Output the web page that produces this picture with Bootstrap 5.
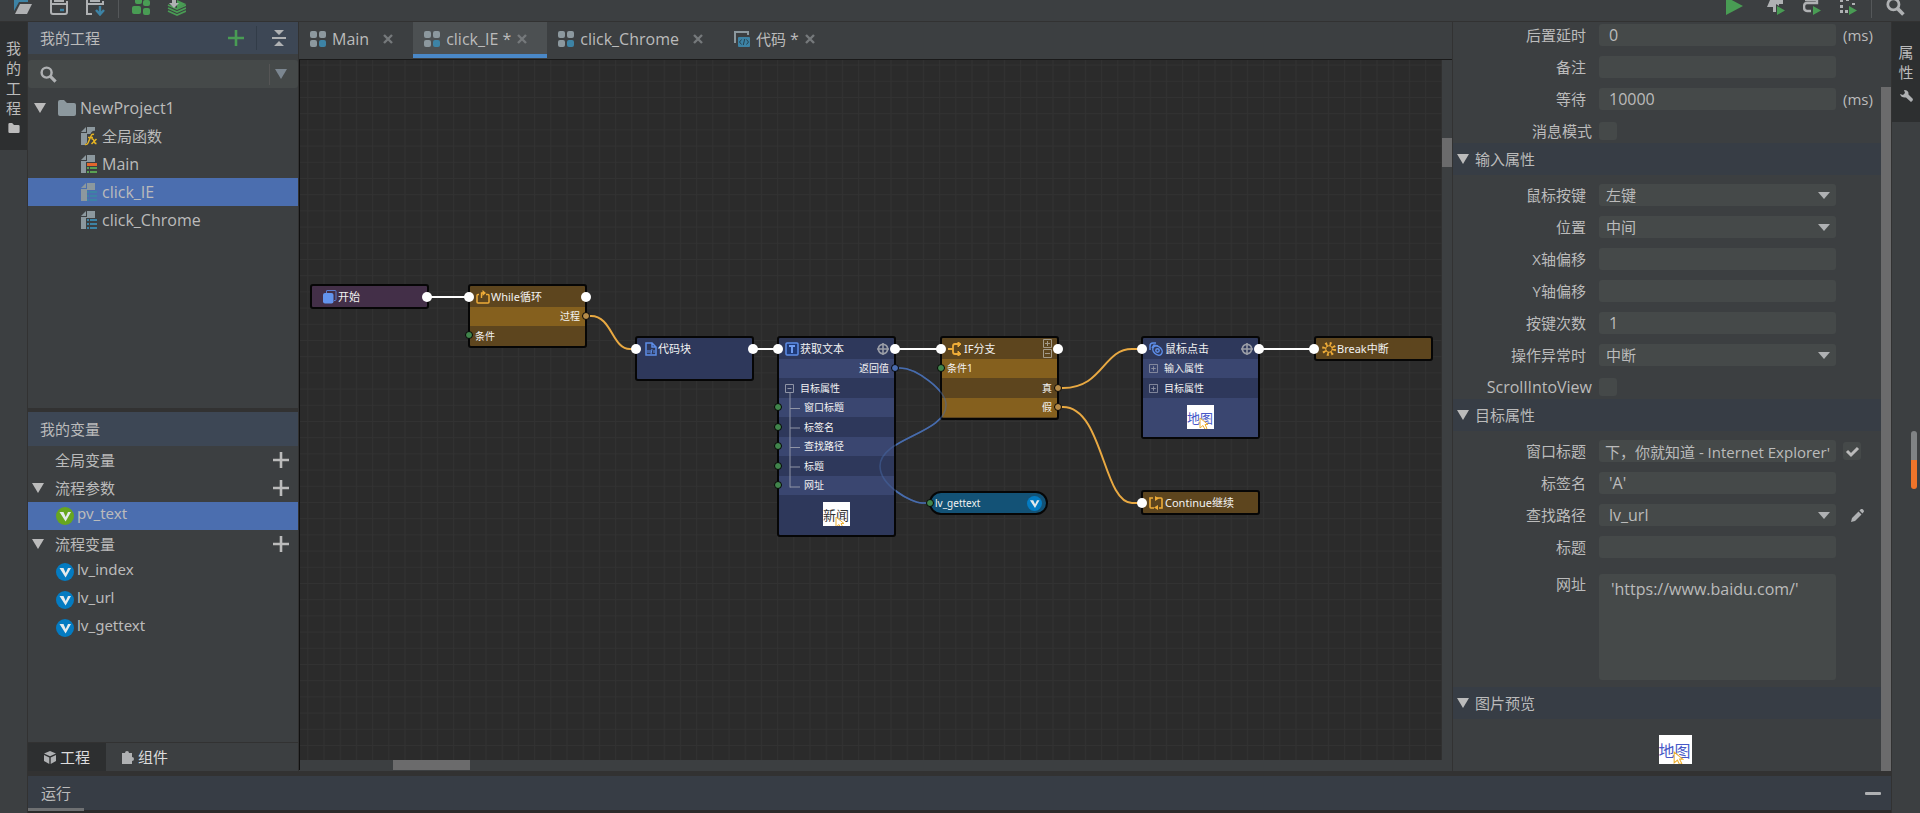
<!DOCTYPE html>
<html lang="zh-CN">
<head>
<meta charset="utf-8">
<meta name="viewport" content="width=device-width, initial-scale=1">
<title>NewProject1</title>
<link href="https://cdn.jsdelivr.net/npm/bootstrap@5.3.0/dist/css/bootstrap.min.css" rel="stylesheet">
<style>
:root{--ui:#3c3f41;--line:#323232;--head:#3d4755;--sub:#373d45;--field:#454949;--ink:#bbbbbb;--sel:#4b6eaf;--icon:#afb1b3}
body{background:var(--ui);color:var(--ink);font:15px/20px "Open Sans","Noto Sans CJK SC",sans-serif}
svg{display:block;flex:none}
button{color:inherit}
.plain{background:none;border:0;padding:0;color:inherit;display:flex;align-items:center}
.latin{font-size:16px}
.toolbar{height:22px;border-bottom:1px solid var(--line);align-items:flex-start}
.toolbar .plain{align-items:flex-start}
.toolbar .rule{width:1px;height:18px;background:#55585a}
.rail{width:27px}
.rail-end{width:29px;border-left:1px solid var(--line)}
.railtab{background:#2d2f30;width:100%;flex-direction:column;align-items:center}
.railtab span{width:15px;word-break:break-all}
.side{width:270px}
.panehead{background:var(--head);padding-left:12px}
.treerow{height:28px;cursor:default;color:inherit;text-decoration:none}
.treerow.on,.treerow:hover{background:var(--sel)}
.varname{font-family:"Noto Sans",sans-serif;padding-top:1px}
.search{height:28px;background:var(--field);margin:6px 0;border-radius:3px}
.search input{background:none;border:0;outline:0;color:inherit;min-width:0}
.sidetab{height:28px;color:#ddd}
.sidetab.on{background:#2d2f30}
.tabs{height:38px;border-bottom:1px solid #1a1a1a;padding-bottom:1px}
.filetab{height:36px;border-bottom:4px solid transparent;padding:2px 20px 0 11px;gap:6px}
.filetab.on{background:#4c5052;border-color:#4a88c7}
.board{background:#2b2b2b;border-left:1px solid #111;overflow:hidden}
.vbar{width:10px}.hbar{height:10px}
.thumb{background:#6b6b6c}
.node{position:absolute;width:119px;border:2px solid #060606;border-radius:3px;font-family:"Noto Sans","Noto Sans CJK SC",sans-serif;font-size:10px;line-height:19px;color:#f2f2f2}
.node .cap{height:21px;line-height:21px;font-size:11px;padding:0 5px 0 6px;gap:1px}
.node .cell{height:19px;padding:0 5px;display:flex;align-items:center}
.node .cell:nth-child(odd){height:20px}
.blue{background:#2e385b}
.blue .cell:nth-child(even),.blue .lit{background:#3a4670}
.gold{background:#5d451e}
.gold .cell:nth-child(even){background:#85601e}
.gold.branch .cell:nth-child(even){background:#85601e}
.plum{background:#432f48}
.pill{border-radius:12px;background:#135276}
.leaf{padding-left:25px!important}
.shot{background:#fff;color:#333;width:27px;height:24px;font-size:13px;line-height:26px;position:relative;overflow:hidden;white-space:nowrap}
.shot svg{position:absolute;left:12px;bottom:0}
.shot.link{color:#4759c8}
.shot.large{width:33px;height:29px;font-size:16px;line-height:32px}
.shot.large svg{left:14px}
.props{width:439px;border-left:1px solid var(--line)}
.section{height:32px;background:var(--sub);padding-left:4px;gap:6px}
.group{display:grid;gap:10px;padding:9px 0 1px}
.group.first{padding-top:2px}
.group.last{padding-bottom:7px}
.prop{display:grid;grid-template-columns:133px 1fr 32px;column-gap:13px;align-items:center;min-height:22px}
.prop>label{text-align:right;white-space:nowrap}
.prop>:nth-child(3){margin-left:-6px}
.prop.tick{grid-template-columns:139px 1fr;column-gap:7px}
.box{height:22px;width:100%;min-width:0;background-color:var(--field);border:0;border-radius:3px;color:var(--ink);padding:0 10px;outline:0;font-size:16px;line-height:20px}
.box.tight{padding:0 3px 0 6px;font-size:15px}
textarea.box{height:106px;padding:5px 12px;resize:none;display:block}
select.box{appearance:none;padding:0 7px;font-size:15px;background-image:url("data:image/svg+xml,%3Csvg xmlns='http://www.w3.org/2000/svg' width='12' height='7'%3E%3Cpath d='M0 0h12L6 7z' fill='%23afb1b3'/%3E%3C/svg%3E");background-repeat:no-repeat;background-position:right 6px center}
select.box.path{padding-left:10px;font-size:16px}
.tickbox{appearance:none;width:18px;height:18px;background:var(--field);border-radius:3px;margin:0;display:block}
.tickbox:checked{background:var(--field) url("data:image/svg+xml,%3Csvg xmlns='http://www.w3.org/2000/svg' width='18' height='18'%3E%3Cpath d='M4 9l4 4 7-7' fill='none' stroke='%23bbb' stroke-width='3'/%3E%3C/svg%3E")}
.runhead{height:34px;background:var(--sub);padding:0 10px 0 13px}
.gutter{height:5px;background:#323232}
.runfoot{height:3px;background:#2b2b2b}
.mark-run{width:56px;height:3px;background:#6e7072;position:absolute;left:0;bottom:-1px}
.meter{position:absolute;right:3px;top:431px;width:6px;height:58px;border-radius:3px;background:linear-gradient(#808385 50%,#f0742a 50%)}
</style>
</head>
<body>
<svg width="0" height="0" class="position-absolute" aria-hidden="true">
 <symbol id="page" viewBox="0 0 16 19"><path d="M6 0h8v7H6v11H0V6h6z" fill="#8c989e"/><path d="M0 5L5 0v5z" fill="#8c989e"/></symbol>
 <symbol id="tri" viewBox="0 0 12 10"><path d="M0 0h12L6 10z" fill="currentColor"/></symbol>
 <symbol id="plus" viewBox="0 0 16 16"><path d="M8 0v16M0 8h16" stroke="currentColor" stroke-width="2.600"/></symbol>
 <symbol id="grid4" viewBox="0 0 16 16"><g fill="#8c989e"><rect width="7" height="7" rx="2"/><rect x="9" width="7" height="7" rx="2"/><rect y="9" width="7" height="7" rx="2"/></g><rect x="9" y="9" width="7" height="7" rx="2" fill="#3d83a5"/></symbol>
 <symbol id="close" viewBox="0 0 10 10"><path d="M1 1l8 8M9 1L1 9" stroke="#75797b" stroke-width="2.4"/></symbol>
 <symbol id="vee" viewBox="0 0 18 18"><circle cx="9" cy="9" r="9" fill="currentColor"/><path d="M3.5 5h4l2.2 5L12 5h3L9.6 14.5z" fill="#e4eaec"/></symbol>
 <symbol id="folder" viewBox="0 0 18 16"><path d="M0 2q0-2 2-2h4l3 3h7q2 0 2 2v9q0 2-2 2H2q-2 0-2-2z" fill="currentColor"/></symbol>
 <symbol id="lens" viewBox="0 0 18 18"><circle cx="7" cy="7" r="5.3" fill="none" stroke="#afb1b3" stroke-width="2.6"/><path d="M11 11l5.5 5.5" stroke="#afb1b3" stroke-width="3.4"/></symbol>
 <symbol id="aim" viewBox="0 0 12 12"><circle cx="6" cy="6" r="4.6" fill="none" stroke="#9a9da6" stroke-width="1.800"/><path d="M6 0v12M0 6h12" stroke="#9a9da6" stroke-width="1.600"/></symbol>
 <symbol id="arrow" viewBox="0 0 10 12"><path d="M1 1v10l3-2.500 2 4 2-1-2-4h3z" fill="#fff" stroke="#efb030"/></symbol>
 <symbol id="open4" viewBox="0 0 10 10"><path d="M.5.5h9v9h-9zM2.500 5h5M5 2.500v5" fill="none" stroke="#8e93a5"/></symbol>
 <symbol id="go" viewBox="0 0 8 9"><path d="M0 0l8 4.500L0 9z" fill="#499c54"/></symbol>
</svg>

<div class="d-flex flex-column vh-100 overflow-hidden position-relative">
 <header class="toolbar d-flex flex-shrink-0 justify-content-between overflow-hidden">
  <div class="d-flex" style="padding-left:14px;gap:13px">
   <div class="d-flex" style="gap:18px">
    <button class="plain" aria-label="打开"><svg width="18" height="15"><path d="M0 0h14v2H5L0 11z" fill="#3d83a5"/><path d="M6 4h12l-5 10H1z" fill="#afb1b3"/></svg></button>
    <button class="plain" aria-label="保存"><svg width="18" height="15"><path d="M1 0v12q0 2 2 2h12q2 0 2-2V1" fill="none" stroke="#afb1b3" stroke-width="2"/><path d="M1 4h16M4 1h10" stroke="#afb1b3" stroke-width="2"/><path d="M10 10h4" stroke="#3d83a5" stroke-width="2.400"/></svg></button>
    <button class="plain" aria-label="另存"><svg width="19" height="16"><path d="M1 0v14h5M1 4h16V1M4 1h10" fill="none" stroke="#afb1b3" stroke-width="2"/><path d="M14 6v8M10 10l4 4.500 4-4.500" fill="none" stroke="#3d83a5" stroke-width="2.400"/></svg></button>
   </div>
   <div class="rule"></div>
   <div class="d-flex" style="gap:17px">
    <button class="plain" aria-label="流程"><svg width="18" height="15"><g fill="#499c54"><rect x="3" y="-4" width="7" height="8" rx="2"/><rect x="11" y="0" width="7" height="6" rx="2"/><rect x="0" y="6" width="9" height="8" rx="2"/><rect x="11" y="8" width="7" height="7" rx="2"/></g></svg></button>
    <button class="plain" aria-label="发布"><svg width="19" height="16"><path d="M10 0l9 4-9 5z" fill="#499c54"/><path d="M1 5l9 4 9-4M1 8l9 4 9-4M1 11l9 4 9-4" fill="none" stroke="#499c54" stroke-width="1.700"/><path d="M5 0h4v3h3L7 8 2 3h3z" fill="#afb1b3"/></svg></button>
   </div>
  </div>
  <div class="d-flex" style="gap:14px;padding-right:15px">
   <div class="d-flex" style="gap:18px">
    <button class="plain" aria-label="运行"><svg width="23" height="16"><path d="M0-3l17 9-17 9z" fill="#499c54"/></svg></button>
    <button class="plain" aria-label="单步"><svg width="18" height="16"><path d="M3 0h13v4h-4v8H6V7H0z" fill="#afb1b3"/><path d="M9 4l10 6-10 6z" fill="#3c3f41"/><use href="#go" x="10" y="6" width="8" height="9"/></svg></button>
    <button class="plain" aria-label="跳过"><svg width="18" height="16"><path d="M2 0h12v3H4q-3 0-3 4t3 4h4" fill="none" stroke="#afb1b3" stroke-width="2.400"/><use href="#go" x="10" y="6" width="8" height="9"/></svg></button>
    <button class="plain" aria-label="断点"><svg width="18" height="16"><path d="M1 0h3v2H1zM7 0h3v1H7zM13 3h3v2h-3zM1 5h3v3H1zM1 10h3v3H1zM6 10h3v3H6z" fill="#afb1b3"/><use href="#go" x="10" y="6" width="8" height="9"/></svg></button>
   </div>
   <div class="rule"></div>
   <button class="plain" aria-label="搜索"><svg width="19" height="16" viewBox="0 3 19 16"><use href="#lens" width="19" height="19"/></svg></button>
  </div>
 </header>

 <div class="d-flex flex-fill overflow-hidden">
  <nav class="rail flex-shrink-0"><button class="plain railtab" style="padding:16px 0 17px"><span>我的工程</span><svg style="margin-top:5px" width="12" height="10"><use href="#folder" width="12" height="10"/></svg></button></nav>

  <div class="d-flex flex-column flex-fill overflow-hidden border-start" style="--bs-border-color:#323232">
   <div class="d-flex flex-fill overflow-hidden">
    <aside class="side d-flex flex-column flex-shrink-0">
     <div class="panehead d-flex align-items-center" style="height:32px">
      <span class="me-auto">我的工程</span>
      <button class="plain" aria-label="新建" style="color:#499c54"><svg width="16" height="16"><use href="#plus"/></svg></button>
      <span class="align-self-stretch my-1" style="width:1px;background:#323c48;margin-left:12px"></span>
      <button class="plain" aria-label="折叠" style="padding:0 12px 0 15px"><svg width="14" height="16"><path d="M2 0h10L7 5zM2 16h10l-5-5z" fill="#afb1b3"/><path d="M0 8h14" stroke="#afb1b3" stroke-width="2"/></svg></button>
     </div>
     <div class="search d-flex align-items-center ps-2 flex-shrink-0">
      <svg class="ms-1" width="17" height="17"><use href="#lens"/></svg>
      <input type="search" class="flex-fill ms-2" aria-label="搜索工程">
      <button class="plain h-75" aria-label="筛选" style="border-left:1px solid #555;color:#7b8690;padding:0 11px 0 5px"><svg width="12" height="10"><use href="#tri"/></svg></button>
     </div>
     <div class="treerow latin d-flex align-items-center" style="padding-left:6px"><svg width="12" height="10"><use href="#tri"/></svg><svg style="margin:0 4px 0 12px;color:#8c989e" width="18" height="16"><use href="#folder"/></svg>NewProject1</div>
     <a href="#" class="treerow d-flex align-items-center" style="padding-left:53px;gap:5px"><svg width="16" height="19"><use href="#page"/><path d="M14.500 6.500q-2-2-3.500 1.500L7.500 17q-1 2-3 1M7 10h5M10 12q2-1 3 2t2 3M15.500 12l-5 5" stroke="#3c3f41" stroke-width="4" fill="none"/><path d="M13 7.500q-2-1-3 1.500L7 16q-1 2-3 1.500M7 10.500h5M10.500 12q2-.5 2.500 2t2.500 2.500M15.500 12l-5 5" stroke="#e6b422" stroke-width="1.500" fill="none"/></svg>全局函数</a>
     <a href="#" class="treerow latin d-flex align-items-center" style="padding-left:53px;gap:5px"><svg width="16" height="19"><use href="#page"/><path d="M5 7h11v12H5z" fill="#3c3f41"/><path d="M6 8h10v3H6z" fill="#e2662c"/><path d="M6 12h2v2H6zm3 0h7v2H9zM6 16h2v2H6zm3 0h7v2H9z" fill="#5aa053"/></svg>Main</a>
     <a href="#" class="treerow latin on d-flex align-items-center" style="padding-left:53px;gap:5px"><svg width="16" height="19"><use href="#page"/><path d="M6 8h2v2H6zm3 0h7v2H9zM6 12h2v2H6zm3 0h7v2H9zM6 16h2v2H6zm3 0h7v2H9z" fill="#3d83a5"/></svg>click_IE</a>
     <a href="#" class="treerow latin d-flex align-items-center" style="padding-left:53px;gap:5px"><svg width="16" height="19"><use href="#page"/><path d="M5 7h11v12H5z" fill="#3c3f41"/><path d="M6 8h2v2H6zm3 0h7v2H9zM6 12h2v2H6zm3 0h7v2H9zM6 16h2v2H6zm3 0h7v2H9z" fill="#3d83a5"/></svg>click_Chrome</a>
     <div class="flex-fill"></div>
     <div style="height:4px;background:#323232"></div>
     <section style="height:330px">
      <div class="panehead d-flex align-items-center" style="height:34px">我的变量</div>
      <div class="treerow d-flex align-items-center" style="padding:0 9px 0 27px"><span class="me-auto">全局变量</span><button class="plain" aria-label="添加全局变量"><svg width="16" height="16"><use href="#plus"/></svg></button></div>
      <div class="treerow d-flex align-items-center" style="padding:0 9px 0 4px"><svg width="12" height="10"><use href="#tri"/></svg><span class="me-auto" style="padding-left:11px">流程参数</span><button class="plain" aria-label="添加流程参数"><svg width="16" height="16"><use href="#plus"/></svg></button></div>
      <a href="#" class="treerow on d-flex" style="padding-left:28px;gap:3px"><svg style="color:#67a61f;margin-top:5px" width="18" height="18"><use href="#vee"/></svg><span class="varname">pv_text</span></a>
      <div class="treerow d-flex align-items-center" style="padding:0 9px 0 4px"><svg width="12" height="10"><use href="#tri"/></svg><span class="me-auto" style="padding-left:11px">流程变量</span><button class="plain" aria-label="添加流程变量"><svg width="16" height="16"><use href="#plus"/></svg></button></div>
      <a href="#" class="treerow d-flex" style="padding-left:28px;gap:3px"><svg style="color:#047bc1;margin-top:5px" width="18" height="18"><use href="#vee"/></svg><span class="varname">lv_index</span></a>
      <a href="#" class="treerow d-flex" style="padding-left:28px;gap:3px"><svg style="color:#047bc1;margin-top:5px" width="18" height="18"><use href="#vee"/></svg><span class="varname">lv_url</span></a>
      <a href="#" class="treerow d-flex" style="padding-left:28px;gap:3px"><svg style="color:#047bc1;margin-top:5px" width="18" height="18"><use href="#vee"/></svg><span class="varname">lv_gettext</span></a>
     </section>
     <div class="d-flex border-top" style="--bs-border-color:#323232">
      <button class="plain sidetab on" style="padding:0 16px;gap:4px"><svg width="12" height="13"><path d="M6 0l6 2.500L6 5.300 0 2.500zM0 4l5.300 2.500V13L0 10zM12 4L6.700 6.500V13L12 10z" fill="#afb1b3"/></svg>工程</button>
      <button class="plain sidetab" style="padding:0 16px;gap:4px"><svg width="12" height="13"><path d="M0 2h3q0-2 2-2t2 2h3v4q2 0 2 2t-2 2v3H0z" fill="#afb1b3"/></svg>组件</button>
     </div>
    </aside>

    <main class="d-flex flex-column flex-fill overflow-hidden border-start" style="--bs-border-color:#323232">
     <div class="tabs d-flex flex-shrink-0">
      <div class="filetab latin d-flex align-items-center"><svg width="16" height="16"><use href="#grid4"/></svg>Main<button class="plain ms-2" aria-label="关闭"><svg width="10" height="10"><use href="#close"/></svg></button></div>
      <div class="filetab latin on d-flex align-items-center"><svg width="16" height="16"><use href="#grid4"/></svg>click_IE *<button class="plain" aria-label="关闭"><svg width="10" height="10"><use href="#close"/></svg></button></div>
      <div class="filetab latin d-flex align-items-center"><svg width="16" height="16"><use href="#grid4"/></svg>click_Chrome<button class="plain ms-2" aria-label="关闭"><svg width="10" height="10"><use href="#close"/></svg></button></div>
      <div class="filetab d-flex align-items-center"><svg width="16" height="16"><path d="M1 12V1h13v3" fill="none" stroke="#8c989e" stroke-width="2"/><rect x="3" y="4" width="13" height="12" fill="#3c3f41"/><rect x="4" y="6" width="12" height="10" rx="1" fill="#3d83a5"/><path d="M7.500 8.500L5.500 11l2 2.500M12.500 8.500l2 2.500-2 2.500M10.700 8l-1.400 6" fill="none" stroke="#26424f"/></svg><span>代码 <span class="latin">*</span></span><button class="plain" aria-label="关闭"><svg width="10" height="10"><use href="#close"/></svg></button></div>
     </div>
     <div class="d-flex flex-fill overflow-hidden">
      <div class="board position-relative flex-fill">
       <svg class="position-absolute top-0 start-0" width="100%" height="100%">
        <defs><pattern id="mesh" x="7.3" y="4.600" width="16.200" height="16.200" patternUnits="userSpaceOnUse"><path d="M.5 0v16.200M0 .5h16.200" stroke="#323232"/></pattern></defs>
        <rect width="100%" height="100%" fill="url(#mesh)"/>
        <g fill="none" stroke-width="2">
         <path d="M127 237h42M453 289h25M595 289h46M959 289h55" stroke="#fff"/>
         <path d="M286 256h5C312 256 312 289 330 289h6M758 328h5C803 328 803 289 832 289h10M758 347h5C803 347 803 443 832 443h10" stroke="#e9a942"/>
         <path id="link" d="M595 308h5C616 308 646 330 646 345C646 374 580 378 580 406C580 426 612 443 622 443h8" stroke="#486cae" stroke-width="1.600"/>
        </g>
       </svg>
       <article class="node plum" style="left:10px;top:224px"><div class="cap d-flex align-items-center" style="padding-left:11px"><svg width="14" height="14"><path d="M3.500 3V1q0-.5.5-.5h8q1 0 1 1v8q0 1-1 1h-1" fill="none" stroke="#5b7ed0"/><rect x="0" y="3" width="10.500" height="10.500" rx="2" fill="#6394ee"/></svg>开始</div></article>
       <article class="node gold" style="left:168px;top:224px"><div class="cap d-flex align-items-center"><svg width="14" height="14"><path d="M3 4.500H2q-1 0-1 1V12q0 1 1 1h10q1 0 1-1V5.500q0-1-1-1h-2" fill="none" stroke="#eeac38" stroke-width="1.500"/><path d="M5.500 8V3H8" fill="none" stroke="#eeac38" stroke-width="1.400"/><path d="M6.500 0L10 3 6.500 6z" fill="#eeac38"/></svg>While循环</div><div class="cell justify-content-end">过程</div><div class="cell">条件</div></article>
       <article class="node blue" style="left:335px;top:276px;height:45px"><div class="cap d-flex align-items-center" style="padding-left:8px"><svg width="12" height="14"><path d="M1 1h6l4 4v8H1zM7 1v4h4" fill="none" stroke="#5d8de8" stroke-width="1.500"/><path d="M3 8v3M5 8v3M7 7L6 12M9 8v3" stroke="#5d8de8"/></svg>代码块</div></article>
       <article class="node blue" style="left:477px;top:276px"><div class="cap d-flex align-items-center"><svg width="14" height="14"><rect x="1" y="1" width="12" height="12" rx="1" fill="#1f3a78" stroke="#5d8de8" stroke-width="1.500"/><path d="M4 4h6M7 4v7" stroke="#6e9bf0" stroke-width="2"/></svg>获取文本<svg class="ms-auto" width="12" height="12"><use href="#aim"/></svg></div>
        <div class="cell justify-content-end">返回值</div>
        <div class="cell" style="padding-left:21px">目标属性</div>
        <div class="cell leaf">窗口标题</div><div class="cell leaf">标签名</div><div class="cell leaf">查找路径</div><div class="cell leaf">标题</div><div class="cell leaf">网址</div>
        <div class="d-flex justify-content-center" style="height:40px;padding-top:7px"><div class="shot">新闻<svg width="10" height="10" viewBox="0 0 10 10"><use href="#arrow" width="10" height="12"/></svg></div></div>
        <svg class="position-absolute" style="left:6px;top:45px" width="16" height="106"><path d="M.5 1.500h8v8h-8zM2.500 5.500h4M5 10v94.500M5 25.500h10M5 45h10M5 64.500h10M5 84h10M5 104h10" fill="none" stroke="#8f94a6"/></svg>
       </article>
       <article class="node gold branch" style="left:640px;top:276px;padding-bottom:1px"><div class="cap d-flex align-items-center"><svg width="15" height="14"><path d="M0 7h5M12 2H7Q5 2 5 4v6q0 2 2 2h5" fill="none" stroke="#eeac38" stroke-width="1.800"/><path d="M10 0l3 2-3 3zM10 9l3 3-3 2z" fill="#eeac38" stroke="#eeac38"/></svg>IF分支<svg class="ms-auto" width="9" height="19"><path d="M.5.500h8v8h-8zM2 4.500h5M4.500 2v5M.5 10.500h8v8h-8zM2 14.500h5" fill="none" stroke="#a39a89"/></svg></div><div class="cell">条件1</div><div class="cell justify-content-end">真</div><div class="cell justify-content-end">假</div></article>
       <article class="node blue" style="left:841px;top:276px"><div class="cap d-flex align-items-center" style="gap:2px"><svg width="14" height="14"><g fill="none" stroke="#5d8de8" stroke-width="1.500"><path d="M1 8V4q0-3 3-3h3"/><ellipse cx="8.500" cy="8.500" rx="5.200" ry="4" transform="rotate(45 8.500 8.500)"/><circle cx="8.500" cy="8.500" r="1.700"/><path d="M3 6l2-3 4 1"/></g></svg>鼠标点击<svg class="ms-auto" width="12" height="12"><use href="#aim"/></svg></div>
        <div class="cell" style="padding-left:6px;gap:6px"><svg width="9" height="9"><use href="#open4"/></svg>输入属性</div>
        <div class="cell" style="padding-left:6px;gap:6px"><svg width="9" height="9"><use href="#open4"/></svg>目标属性</div>
        <div class="lit d-flex justify-content-center" style="height:39px;padding-top:7px"><div class="shot link">地图<svg width="10" height="12"><use href="#arrow"/></svg></div></div></article>
       <article class="node gold" style="left:1014px;top:276px"><div class="cap d-flex align-items-center"><svg width="14" height="14"><circle cx="7" cy="7" r="5" fill="none" stroke="#eeac38" stroke-width="4" stroke-dasharray="1.700 2.230"/><circle cx="7" cy="7" r="3.300" fill="none" stroke="#eeac38"/></svg>Break中断</div></article>
       <article class="node gold" style="left:841px;top:430px"><div class="cap d-flex align-items-center" style="gap:2px"><svg width="14" height="14"><path d="M4 2H1v9q0 1 1 1h3M10 12h3V3q0-1-1-1H7" fill="none" stroke="#eeac38" stroke-width="1.600"/><path d="M6 0l4 2.500L6 5zM9 9v5l-4-2.500z" fill="#eeac38"/></svg>Continue继续</div></article>
       <article class="node pill d-flex align-items-center justify-content-between" style="left:629px;top:431px;height:24px;padding:0 4px">lv_gettext<svg style="color:#047bc1" width="15" height="15"><use href="#vee"/></svg></article>
       <svg class="position-absolute top-0 start-0 pe-none" width="100%" height="100%">
        <use href="#link" fill="none" opacity=".45"/>
        <g fill="#fff"><circle cx="127" cy="237" r="5"/><circle cx="169" cy="237" r="5"/><circle cx="286" cy="237" r="5"/><circle cx="336" cy="289" r="5"/><circle cx="453" cy="289" r="5"/><circle cx="478" cy="289" r="5"/><circle cx="595" cy="289" r="5"/><circle cx="641" cy="289" r="5"/><circle cx="758" cy="289" r="5"/><circle cx="842" cy="289" r="5"/><circle cx="959" cy="289" r="5"/><circle cx="1014" cy="289" r="5"/><circle cx="842" cy="443" r="5"/></g>
        <g fill="#41854c" stroke="#060606"><circle cx="169" cy="275" r="3.500"/><circle cx="478" cy="347" r="3.500"/><circle cx="478" cy="367" r="3.500"/><circle cx="478" cy="386" r="3.500"/><circle cx="478" cy="406" r="3.500"/><circle cx="478" cy="425" r="3.500"/><circle cx="641" cy="308" r="3.500"/><circle cx="630" cy="443" r="3.500"/></g>
        <g fill="#b78c49" stroke="#060606"><circle cx="286" cy="256" r="3.500"/><circle cx="758" cy="328" r="3.500"/><circle cx="758" cy="347" r="3.500"/></g>
        <circle cx="595" cy="308" r="3.500" fill="#4a6cb0" stroke="#060606"/>
       </svg>
      </div>
      <div class="vbar flex-shrink-0"><div class="thumb" style="height:29px;margin-top:78px"></div></div>
     </div>
     <div class="hbar flex-shrink-0" style="margin-bottom:1px;border-left:1px solid #111"><div class="thumb h-100" style="width:77px;margin-left:93px"></div></div>
    </main>

    <aside class="props d-flex flex-shrink-0 overflow-hidden">
     <form class="flex-fill overflow-hidden">
      <div class="group first">
       <div class="prop"><label for="f1">后置延时</label><input id="f1" class="box" value="0"><span>(ms)</span></div>
       <div class="prop"><label for="f2">备注</label><input id="f2" class="box"></div>
       <div class="prop"><label for="f3">等待</label><input id="f3" class="box" value="10000"><span>(ms)</span></div>
       <div class="prop tick"><label for="f4">消息模式</label><input id="f4" type="checkbox" class="tickbox"></div>
      </div>
      <div class="section d-flex align-items-center"><svg width="12" height="10"><use href="#tri"/></svg>输入属性</div>
      <div class="group">
       <div class="prop"><label for="f5">鼠标按键</label><select id="f5" class="box"><option>左键</option></select></div>
       <div class="prop"><label for="f6">位置</label><select id="f6" class="box"><option>中间</option></select></div>
       <div class="prop"><label for="f7">X轴偏移</label><input id="f7" class="box"></div>
       <div class="prop"><label for="f8">Y轴偏移</label><input id="f8" class="box"></div>
       <div class="prop"><label for="f9">按键次数</label><input id="f9" class="box" value="1"></div>
       <div class="prop"><label for="f10">操作异常时</label><select id="f10" class="box"><option>中断</option></select></div>
       <div class="prop tick"><label for="f11" class="latin">ScrollIntoView</label><input id="f11" type="checkbox" class="tickbox"></div>
      </div>
      <div class="section d-flex align-items-center"><svg width="12" height="10"><use href="#tri"/></svg>目标属性</div>
      <div class="group last">
       <div class="prop"><label for="f12">窗口标题</label><input id="f12" class="box tight" value="下，你就知道 - Internet Explorer'"><input type="checkbox" class="tickbox" aria-label="启用窗口标题" checked></div>
       <div class="prop"><label for="f13">标签名</label><input id="f13" class="box" value="'A'"></div>
       <div class="prop"><label for="f14">查找路径</label><select id="f14" class="box path"><option>lv_url</option></select><button type="button" class="plain" aria-label="编辑"><svg class="ms-2" width="13" height="13"><path d="M0 13l1-4 6.500-6.500 3 3L4 12zM8.500 1.500L10 0q1-.5 2 .5t1 2L11.500 4.500z" fill="#afb1b3"/></svg></button></div>
       <div class="prop"><label for="f15">标题</label><input id="f15" class="box"></div>
       <div class="prop align-items-start" style="margin-top:6px"><label for="f16">网址</label><textarea id="f16" class="box">'https://www.baidu.com/'</textarea></div>
      </div>
      <div class="section d-flex align-items-center"><svg width="12" height="10"><use href="#tri"/></svg>图片预览</div>
      <div class="d-flex justify-content-center py-3 ps-3"><div class="shot link large">地图<svg width="11" height="13"><use href="#arrow"/></svg></div></div>
     </form>
     <div class="vbar d-flex flex-shrink-0" style="padding-top:65px"><div class="thumb flex-fill"></div></div>
    </aside>
   </div>
   <div class="gutter flex-shrink-0"></div>
   <div class="runhead d-flex align-items-center justify-content-between flex-shrink-0 position-relative">运行<button class="plain" aria-label="最小化"><svg width="16" height="3"><rect width="16" height="3" rx="1" fill="#afb1b3"/></svg></button><span class="mark-run"></span></div>
   <div class="runfoot flex-shrink-0"></div>
  </div>

  <nav class="rail-end flex-shrink-0"><button class="plain railtab" style="padding:20px 0"><span>属性</span><svg class="mt-2" width="13" height="12"><path d="M4 0q5 0 4.500 4.500L13 9q0 2-2 3L6 7.500Q1 8 0 4l3 1 2-2z" fill="#afb1b3"/></svg></button></nav>
 </div>
 <div class="meter"></div>
</div>
<script src="https://cdn.jsdelivr.net/npm/bootstrap@5.3.0/dist/js/bootstrap.bundle.min.js"></script>
</body>
</html>
